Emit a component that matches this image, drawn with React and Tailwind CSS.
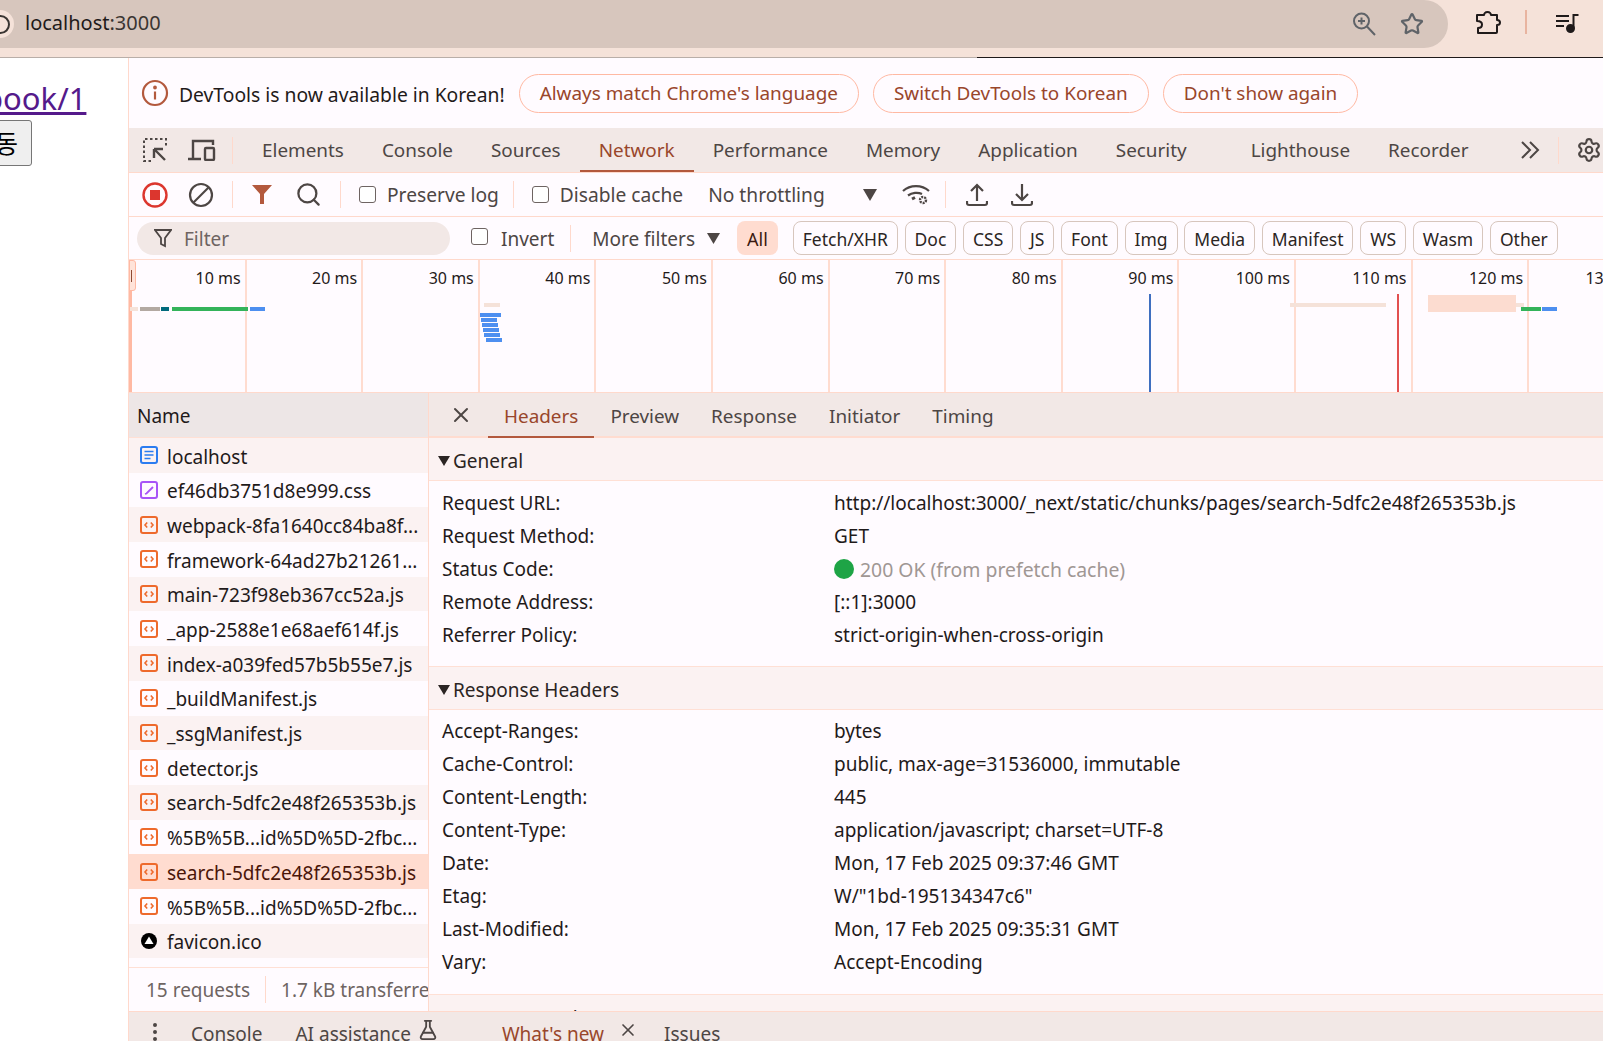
import { FlaskConical, MoreVertical, Search, Settings, Star, X } from "lucide-react";

const font = "font-['Noto_Sans',sans-serif]";

const tabs = [
  ["Elements", ""], ["Console", ""], ["Sources", ""], ["Network", ""], ["Performance", ""],
  ["Memory", ""], ["Application", ""], ["Security", ""], ["Lighthouse", "ml-[26px]"], ["Recorder", ""],
];
const chips = ["Fetch/XHR", "Doc", "CSS", "JS", "Font", "Img", "Media", "Manifest", "WS", "Wasm", "Other"];
const files = [
  ["localhost", "doc"], ["ef46db3751d8e999.css", "css"], ["webpack-8fa1640cc84ba8f...", "js"], ["framework-64ad27b21261...", "js"],
  ["main-723f98eb367cc52a.js", "js"], ["_app-2588e1e68aef614f.js", "js"], ["index-a039fed57b5b55e7.js", "js"],
  ["_buildManifest.js", "js"], ["_ssgManifest.js", "js"], ["detector.js", "js"], ["search-5dfc2e48f265353b.js", "js"],
  ["%5B%5B...id%5D%5D-2fbc...", "js"], ["search-5dfc2e48f265353b.js", "js"], ["%5B%5B...id%5D%5D-2fbc...", "js"], ["favicon.ico", "ico"],
];
const general = [
  ["Request URL:", "http://localhost:3000/_next/static/chunks/pages/search-5dfc2e48f265353b.js"],
  ["Request Method:", "GET"],
  ["Status Code:", "status"],
  ["Remote Address:", "[::1]:3000"],
  ["Referrer Policy:", "strict-origin-when-cross-origin"],
];
const response = [
  ["Accept-Ranges:", "bytes"],
  ["Cache-Control:", "public, max-age=31536000, immutable"],
  ["Content-Length:", "445"],
  ["Content-Type:", "application/javascript; charset=UTF-8"],
  ["Date:", "Mon, 17 Feb 2025 09:37:46 GMT"],
  ["Etag:", 'W/"1bd-195134347c6"'],
  ["Last-Modified:", "Mon, 17 Feb 2025 09:35:31 GMT"],
  ["Vary:", "Accept-Encoding"],
];
const ticks = ["10 ms", "20 ms", "30 ms", "40 ms", "50 ms", "60 ms", "70 ms", "80 ms", "90 ms", "100 ms", "110 ms", "120 ms", "130 ms"];

function Checkbox({ className }) {
  return <span className={`block h-[17px] w-[17px] shrink-0 rounded-[3px] border border-[#6e6462] bg-white ${className}`} />;
}

function Divider({ className }) {
  return <span className={`h-[27px] w-px shrink-0 bg-[#ffd9cc] ${className}`} />;
}

function FileIcon({ type }) {
  if (type === "doc") {
    return (
      <svg width="20" height="20" viewBox="0 0 20 20" fill="none" stroke="#2b7cf0" strokeWidth="2">
        <rect x="2" y="2" width="16" height="16" rx="2" />
        <path d="M5.5 6.5h9M5.5 10h9M5.5 13.5h6" strokeWidth="1.6" />
      </svg>
    );
  }
  if (type === "css") {
    return (
      <svg width="20" height="20" viewBox="0 0 20 20" fill="none" stroke="#a855f7" strokeWidth="2">
        <rect x="2" y="2" width="16" height="16" rx="2" />
        <path d="M6 14l1.5-.5L14 7" strokeWidth="1.8" />
      </svg>
    );
  }
  if (type === "ico") {
    return (
      <svg width="20" height="20" viewBox="0 0 20 20">
        <circle cx="10" cy="10" r="8" fill="#000" />
        <path d="M10 5.5l4.5 7.5h-9z" fill="#fff" />
      </svg>
    );
  }
  return (
    <svg width="20" height="20" viewBox="0 0 20 20" fill="none" stroke="#ee6a2c" strokeWidth="2">
      <rect x="2" y="2" width="16" height="16" rx="2" />
      <path d="M8.2 7.5L6 10l2.2 2.5M11.8 7.5L14 10l-2.2 2.5" strokeWidth="1.6" />
    </svg>
  );
}

function HeaderRow({ name, value }) {
  return (
    <div className="flex h-[33px] items-center pl-[13px] text-[19px] text-[#1f1a1a]">
      <span className="w-[392px] shrink-0">{name}</span>
      {value === "status" ? (
        <span className="flex items-center gap-[6px] text-[19.4px] text-[#a09794]">
          <span className="h-[20px] w-[20px] rounded-full bg-[#1ea446]" />
          200 OK (from prefetch cache)
        </span>
      ) : (
        <span>{value}</span>
      )}
    </div>
  );
}

function SectionTitle({ children }) {
  return (
    <div className="flex h-[43px] shrink-0 items-center gap-[3px] border-b border-[#ffe0d5] bg-[#fbf2f2] pt-[4px] pl-[9px] text-[19px] text-[#2b2523]">
      <svg width="12" height="12" viewBox="0 0 12 12"><path d="M0 1h12L6 11z" fill="#2b2523" /></svg>
      {children}
    </div>
  );
}

function Overview() {
  return (
    <div className="relative h-[133px] shrink-0 overflow-hidden border-b border-[#ffd9cc] bg-[#fffbff]">
      <div className="flex h-full pl-[1px]">
        {ticks.map((t) => (
          <div key={t} className="h-full w-[116.6px] shrink-0 border-r-2 border-[#ffdcd0] pt-[6px] pr-[4px] text-right text-[16px] whitespace-nowrap text-[#1f1a1a]">
            {t}
          </div>
        ))}
      </div>
      <span className="absolute top-0 left-0 h-full w-[3px] bg-[#ffb9a3]" />
      <span className="absolute top-0 left-0 flex h-[31px] w-[7px] items-center rounded-r-[3px] border border-[#ffb9a3] bg-[#ffe3d9]">
        <span className="ml-[1px] h-[12px] w-[1px] bg-[#8e4a32]" />
      </span>
      <svg className="absolute top-0 left-0" width="1475" height="133" viewBox="0 0 1475 133">
        <rect x="1" y="47" width="8" height="4" fill="#f5e2d9" />
        <rect x="11" y="47" width="20" height="4" fill="#b3a9a2" />
        <rect x="32" y="47" width="8" height="4" fill="#006a7c" />
        <rect x="43" y="47" width="76" height="4" fill="#34b35a" />
        <rect x="121" y="47" width="15" height="4" fill="#4d8ff0" />
        <rect x="355" y="43" width="16" height="4" fill="#f5e2d9" />
        <rect x="351" y="53" width="21" height="4" fill="#4d8ff0" />
        <rect x="352" y="58" width="16" height="4" fill="#4d8ff0" />
        <rect x="353" y="63" width="16" height="4" fill="#4d8ff0" />
        <rect x="354" y="68" width="16" height="4" fill="#4d8ff0" />
        <rect x="355" y="73" width="16" height="4" fill="#4d8ff0" />
        <rect x="357" y="78" width="16" height="4" fill="#4d8ff0" />
        <rect x="1020" y="34" width="2" height="99" fill="#3f6fc0" />
        <rect x="1161" y="43" width="96" height="4" fill="#f5e2d9" />
        <rect x="1268" y="34" width="2" height="99" fill="#e25050" />
        <rect x="1299" y="35" width="88" height="17" fill="#fcdcd0" />
        <rect x="1387" y="43" width="8" height="4" fill="#f5e2d9" />
        <rect x="1392" y="47" width="20" height="4" fill="#34b35a" />
        <rect x="1413" y="47" width="15" height="4" fill="#4d8ff0" />
      </svg>
    </div>
  );
}

export default function App() {
  return (
    <div className={`flex h-[1041px] w-[1603px] flex-col overflow-hidden bg-white ${font}`}>
      {/* browser toolbar */}
      <div className="flex h-[57px] shrink-0 items-start bg-[#f5e2d9]">
        <div className="relative flex h-[48px] w-[1448px] items-center rounded-r-[24px] bg-[#d7c6bd] pr-[24px] pl-[25px] text-[20px] text-[#3a3532]">
          <span className="absolute top-[10px] left-[-14px] flex h-[28px] w-[28px] items-center justify-center rounded-full bg-[#f5e2d9]">
            <span className="h-[19px] w-[19px] rounded-full border-2 border-[#3a3532]" />
          </span>
          <span className="flex-1 pb-[2px]"><span className="text-[#1f1a1a]">localhost</span>:3000</span>
          <svg width="26" height="26" viewBox="0 0 26 26" fill="none" stroke="#5f6368" strokeWidth="2" className="mr-[23px]">
            <circle cx="10.5" cy="10" r="7.5" />
            <path d="M16 15.5l8 8.5M10.5 6.5v7M7 10h7" />
          </svg>
          <Star size={24} strokeWidth={2.2} className="text-[#5f6368]" />
        </div>
        <svg width="26" height="26" viewBox="0 0 26 26" fill="none" stroke="#1f1a1a" strokeWidth="2" strokeLinejoin="round" className="mt-[9px] ml-[27px]">
          <path d="M2 6h7c0-1 1-3 3.500-3S16 5 16 6h6v5c1 0 3 .5 3 2.500S23 16 22 16v7a1 1 0 0 1-1 1H3v-5c3 0 4-1 4-3.500S5 12 2 12z" />
        </svg>
        <span className="mt-[10px] ml-[24px] h-[24px] w-[2px] bg-[#e8b4a0]" />
        <svg width="24" height="20" viewBox="0 0 24 20" className="mt-[13px] ml-[29px]" fill="none" stroke="#1f1a1a" strokeWidth="2">
          <path d="M0 3h13M0 8h13M0 13h8M17.500 15V2h5" />
          <circle cx="14.500" cy="15.500" r="3.500" fill="#1f1a1a" />
        </svg>
      </div>
      <div className="flex h-px shrink-0">
        <span className="w-[977px] bg-[#b9aea8]" />
        <span className="flex-1 bg-[#1f1a1a]" />
      </div>

      <div className="flex min-h-0 flex-1">
        {/* inspected page */}
        <div className="w-[128px] shrink-0 overflow-hidden bg-white">
          <a className="mt-[18px] ml-[-16px] block text-[31px] leading-[44px] whitespace-nowrap text-[#551a8b] underline">book/1</a>
          <button className="mt-[0px] ml-[-20px] flex h-[46px] w-[52px] items-center justify-end rounded-[3px] border border-[#767676] bg-[#efefef] pr-[13px] font-['Noto_Sans_CJK_KR',sans-serif] text-[25px] text-black">동</button>
        </div>

        {/* devtools */}
        <div className="flex min-w-0 flex-1 flex-col border-l border-[#ffd9cc] bg-[#fffbff]">
          <div className="flex h-[70px] shrink-0 items-center gap-[14px] pl-[12px] text-[18.9px]">
            <svg width="28" height="28" viewBox="0 0 28 28" fill="none" stroke="#b3593d" strokeWidth="2.2" className="mr-[-4px]">
              <circle cx="14" cy="14" r="12" />
              <path d="M14 12.500v8" />
              <circle cx="14" cy="8.500" r="0.800" fill="#b3593d" />
            </svg>
            <span className="pt-[5px] text-[19.3px] text-[#1f1a1a]">DevTools is now available in Korean!</span>
            {["Always match Chrome's language", "Switch DevTools to Korean", "Don't show again"].map((b) => (
              <span key={b} className="flex h-[39px] items-center rounded-full border border-[#ffb9a3] px-[20px] text-[#99462b]">{b}</span>
            ))}
          </div>

          <div className="flex h-[45px] shrink-0 items-stretch overflow-hidden border-b border-[#ffd9cc] bg-[#f2e8e6] text-[18.9px] text-[#4d4644]">
            <div className="flex shrink-0 items-center pl-[14px]">
              <svg width="24" height="24" viewBox="0 0 24 24" fill="none" stroke="#4d4644" strokeWidth="2">
                <path d="M8 23H1V1h22v7" strokeDasharray="2.500 2.500" />
                <path d="M11 11l11 11M11 11h9M11 11v9" strokeWidth="2.400" />
              </svg>
              <svg width="28" height="22" viewBox="0 0 28 22" fill="none" stroke="#4d4644" strokeWidth="2.400" className="ml-[21px]">
                <path d="M5 19V2h20v4M0 20h13" />
                <rect x="17" y="9" width="9" height="12" rx="1" />
              </svg>
              <Divider className="ml-[16px]" />
            </div>
            <div className="ml-[10px] flex flex-1 items-stretch">
              {tabs.map(([t, cls]) => (
                <span key={t} className={`flex items-center border-b-2 px-[19px] pt-[2px] ${cls} ${t === "Network" ? "border-[#b3593d] text-[#99462b]" : "border-transparent"}`}>{t}</span>
              ))}
              <svg width="20" height="18" viewBox="0 0 20 18" fill="none" stroke="#4d4644" strokeWidth="2" className="mt-[13px] ml-[33px] shrink-0">
                <path d="M2 1l8 8-8 8M10 1l8 8-8 8" />
              </svg>
              <Divider className="mt-[9px] ml-[18px]" />
              <Settings size={26} className="mt-[9px] ml-[17px] shrink-0 text-[#4d4644]" />
            </div>
          </div>

          <div className="flex h-[44px] shrink-0 items-center border-b border-[#ffd9cc] pl-[13px] text-[19.2px] text-[#4d4644]">
            <svg width="26" height="26" viewBox="0 0 26 26">
              <circle cx="13" cy="13" r="11.500" fill="none" stroke="#dc362e" strokeWidth="2.400" />
              <rect x="8" y="8" width="10" height="10" fill="#dc362e" />
            </svg>
            <svg width="26" height="26" viewBox="0 0 26 26" fill="none" stroke="#4d4644" strokeWidth="2.200" className="ml-[20px]">
              <circle cx="13" cy="13" r="11" />
              <path d="M5.500 20.500L20.500 5.500" />
            </svg>
            <Divider className="ml-[18px]" />
            <svg width="20" height="20" viewBox="0 0 20 20" className="ml-[19px]"><path d="M0 0h20l-8 9v10H8V9z" fill="#b3593d" /></svg>
            <Search size={27} strokeWidth={2} className="ml-[23px] text-[#4d4644]" />
            <Divider className="ml-[18px]" />
            <Checkbox className="ml-[18px]" />
            <span className="ml-[11px] pt-[2px] whitespace-nowrap">Preserve log</span>
            <Divider className="ml-[14px]" />
            <Checkbox className="ml-[18px]" />
            <span className="ml-[11px] pt-[2px] whitespace-nowrap">Disable cache</span>
            <span className="ml-[25px] w-[155px] shrink-0 pt-[2px] whitespace-nowrap">No throttling</span>
            <svg width="14" height="12" viewBox="0 0 14 12" className="shrink-0"><path d="M0 0h14L7 12z" fill="#4d4644" /></svg>
            <svg width="28" height="26" viewBox="0 0 28 26" fill="none" stroke="#4d4644" strokeWidth="2.200" className="ml-[25px] shrink-0">
              <path d="M1 9c7-6.500 19-6.500 26 0M6 13.500c4-3 10-3.500 14-1.500" />
              <path d="M10 17l3-1.500" strokeWidth="3" />
              <circle cx="21" cy="18" r="3" strokeWidth="2.400" strokeDasharray="2 1" />
            </svg>
            <Divider className="ml-[15px]" />
            <svg width="22" height="24" viewBox="0 0 22 24" fill="none" stroke="#4d4644" strokeWidth="2.200" className="ml-[20px] shrink-0"><path d="M11 18V2M5 8l6-6 6 6M1 18v2a2 2 0 0 0 2 2h16a2 2 0 0 0 2-2v-2" /></svg>
            <svg width="22" height="24" viewBox="0 0 22 24" fill="none" stroke="#4d4644" strokeWidth="2.200" className="ml-[23px] shrink-0"><path d="M11 1v16M5 11l6 6 6-6M1 18v2a2 2 0 0 0 2 2h16a2 2 0 0 0 2-2v-2" /></svg>
          </div>

          <div className="flex h-[43px] shrink-0 items-center border-b border-[#ffd9cc] pl-[8px] text-[19px] text-[#4d4644]">
            <div className="flex h-[33px] w-[313px] shrink-0 items-center rounded-full bg-[#f2e8e6] pl-[17px] text-[#6e6462]">
              <svg width="18" height="20" viewBox="0 0 18 20" fill="none" stroke="#4d4644" strokeWidth="1.800" className="mr-[12px]"><path d="M1 2h16l-6 8v8l-4-2v-6z" /></svg>
              <span className="pt-[2px]">Filter</span>
            </div>
            <Checkbox className="ml-[21px] mb-[3px]" />
            <span className="ml-[13px] pt-[2px]">Invert</span>
            <Divider className="ml-[16px]" />
            <span className="ml-[21px] pt-[2px] whitespace-nowrap">More filters</span>
            <svg width="13" height="11" viewBox="0 0 13 11" className="ml-[12px] shrink-0"><path d="M0 0h13L6.500 11z" fill="#4d4644" /></svg>
            <span className="ml-[17px] flex h-[34px] items-center rounded-[8px] bg-[#ffdcd0] px-[10px] pt-[2px] text-[18px] text-[#3a1a10]">All</span>
            <div className="ml-[15px] flex gap-[6.7px] text-[17.5px]">
              {chips.map((c) => (
                <span key={c} className="flex h-[34px] items-center rounded-[8px] border border-[#d7c6bd] px-[9px] pt-[2px] text-[#2b2523]">{c}</span>
              ))}
            </div>
          </div>

          <Overview />

          <div className="flex min-h-0 flex-1">
            <div className="flex w-[300px] shrink-0 flex-col border-r border-[#ffd9cc]">
              <div className="flex h-[45px] shrink-0 items-center border-b border-[#ffe0d5] bg-[#ede6e6] pt-[3px] pl-[8px] text-[19px] text-[#1f1a1a]">Name</div>
              {files.map(([name, type], i) => (
                <div key={i} className={`flex h-[34.7px] shrink-0 items-center gap-[8px] pl-[10px] text-[19px] whitespace-nowrap ${i === 12 ? "bg-[#ffdcd0] text-[#4a1508]" : i % 2 === 0 ? "bg-[#fbf2f2] text-[#1f1a1a]" : "bg-[#fffbff] text-[#1f1a1a]"}`}>
                  <FileIcon type={type} />
                  <span className="pt-[3px]">{name}</span>
                </div>
              ))}
              <div className="mt-[9px] flex h-[44px] shrink-0 items-center overflow-hidden border-t border-[#ffe0d5] pl-[17px] text-[19px] whitespace-nowrap text-[#6e6462]">
                15 requests
                <span className="mx-[15px] h-[27px] w-px shrink-0 bg-[#ffd9cc]" />
                1.7 kB transferred
              </div>
            </div>

            <div className="flex min-w-0 flex-1 flex-col overflow-hidden">
              <div className="flex h-[45px] shrink-0 items-stretch border-b-2 border-[#ffdcd0] bg-[#f2e8e6] text-[18.9px] text-[#4d4644]">
                <X size={24} strokeWidth={2} className="mt-[10px] mr-[15px] ml-[20px] shrink-0" />
                <span className="mb-[-2px] flex items-center border-b-2 border-[#b3593d] px-[16px] pt-[3px] text-[#99462b]">Headers</span>
                <span className="flex items-center px-[16px] pt-[3px]">Preview</span>
                <span className="flex items-center px-[16px] pt-[3px]">Response</span>
                <span className="flex items-center px-[16px] pt-[3px]">Initiator</span>
                <span className="flex items-center px-[16px] pt-[3px]">Timing</span>
              </div>
              <SectionTitle>General</SectionTitle>
              <div className="flex shrink-0 flex-col border-b border-[#ffe0d5] pt-[6px] pb-[14px]">
                {general.map(([n, v]) => <HeaderRow key={n} name={n} value={v} />)}
              </div>
              <SectionTitle>Response Headers</SectionTitle>
              <div className="flex shrink-0 flex-col border-b border-[#ffe0d5] pt-[5px] pb-[15px]">
                {response.map(([n, v]) => <HeaderRow key={n} name={n} value={v} />)}
              </div>
              <SectionTitle>Request Headers</SectionTitle>
            </div>
          </div>

          <div className="flex h-[30px] shrink-0 items-start overflow-hidden border-t border-[#ffd9cc] bg-[#f2e8e6] text-[19px] text-[#4d4644]">
            <MoreVertical size={24} className="mt-[8px] ml-[14px]" />
            <span className="ml-[24px] pt-[8px]">Console</span>
            <span className="ml-[33px] pt-[8px]">AI assistance</span>
            <FlaskConical size={22} className="mt-[7px] ml-[6px]" />
            <span className="ml-[63px] pt-[8px] text-[#99462b]">What's new</span>
            <X size={20} className="mt-[8px] ml-[14px]" />
            <span className="ml-[26px] pt-[8px]">Issues</span>
          </div>
        </div>
      </div>
    </div>
  );
}
